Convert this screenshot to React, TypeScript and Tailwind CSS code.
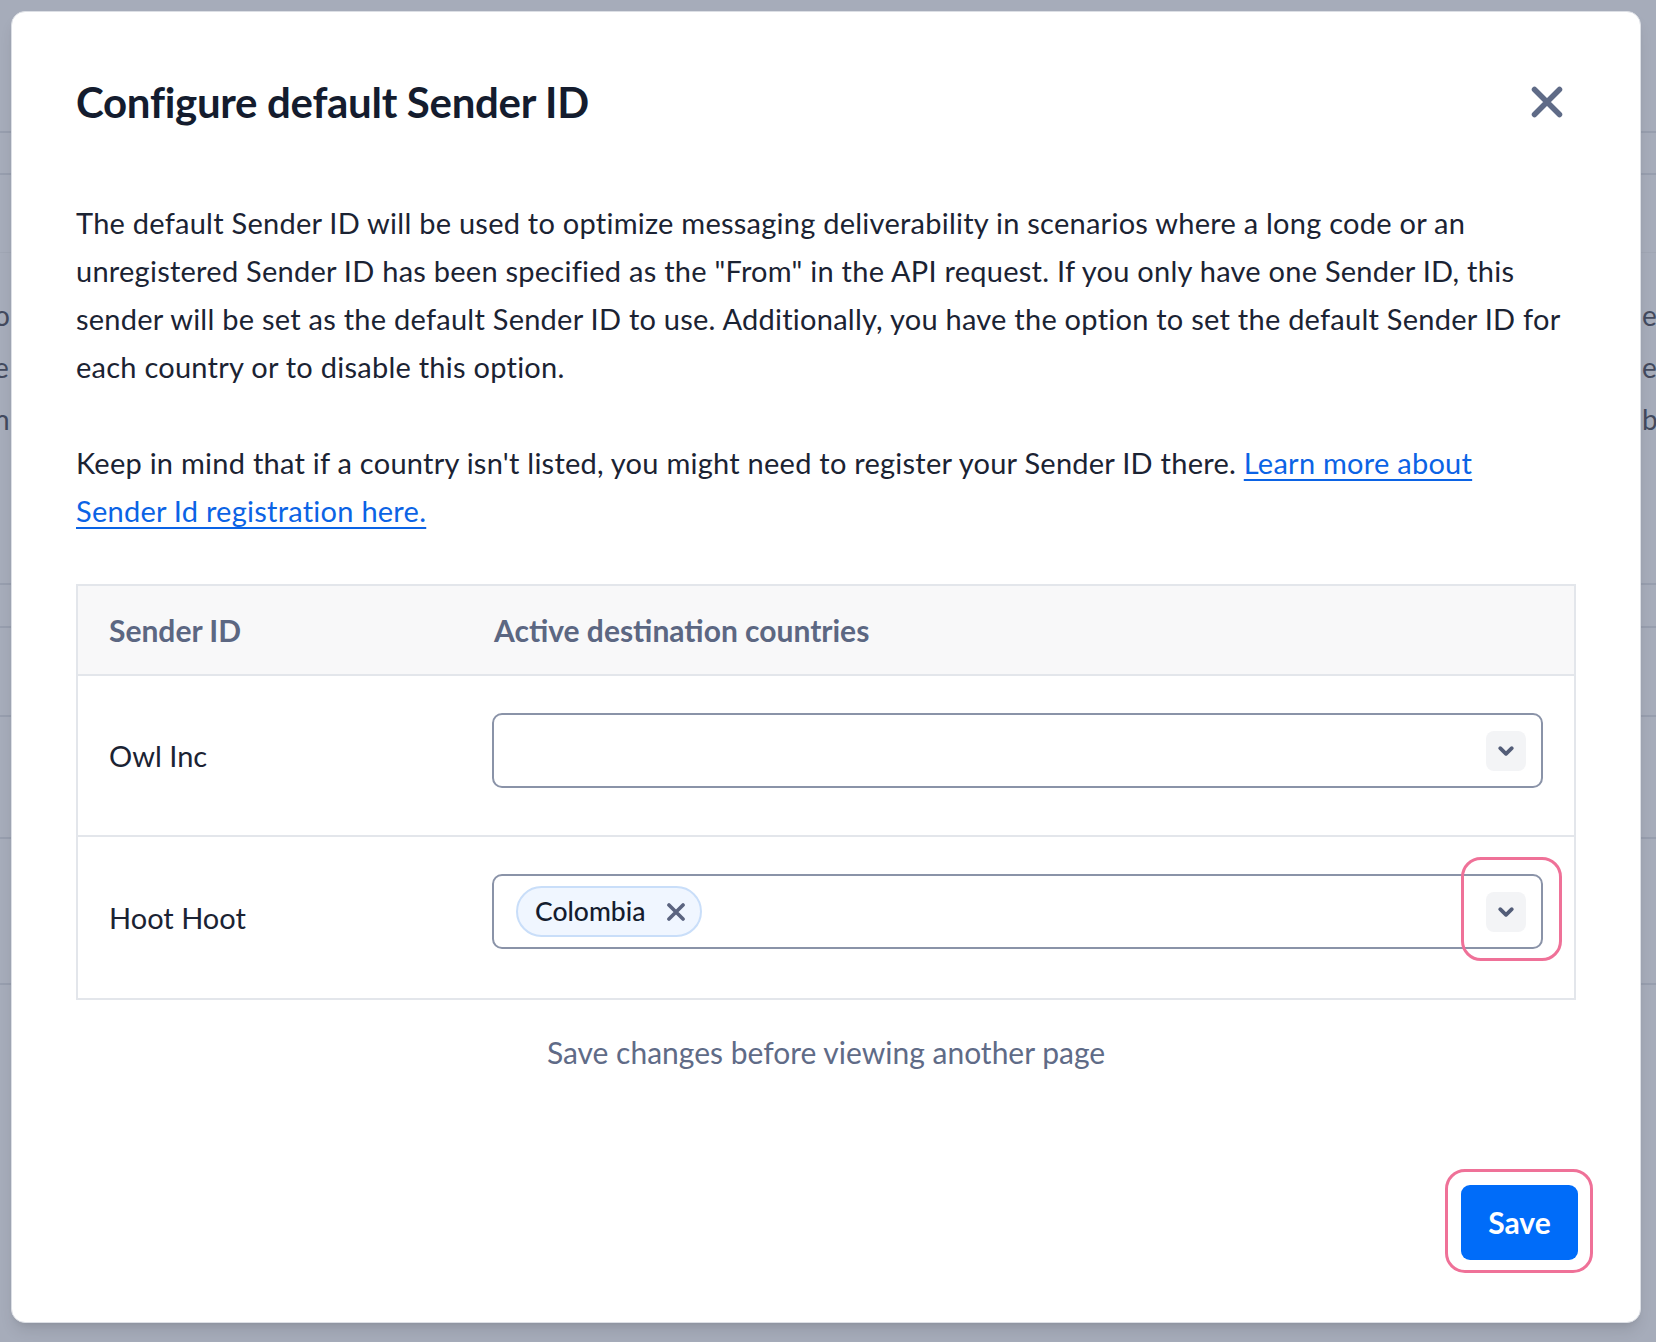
import { useState } from "react"

type SenderRow = {
    id: number
    name: string
    countries: string[]
    highlight?: boolean
}

const rows: SenderRow[] = [
    { id: 1, name: "Owl Inc", countries: [] },
    { id: 2, name: "Hoot Hoot", countries: ["Colombia"], highlight: true },
]

function ChevronDown() {
    return (
        <svg width="18" height="12" viewBox="0 0 18 12" fill="none">
            <path d="M3.2 3.2 9 8.8l5.8-5.6" stroke="#535d78" strokeWidth="3.8" strokeLinecap="round" strokeLinejoin="round" />
        </svg>
    )
}

function CloseIcon({ size = 32, stroke = 5.5, color = "#5f6b87" }: { size?: number; stroke?: number; color?: string }) {
    return (
        <svg width={size} height={size} viewBox="0 0 32 32" fill="none">
            <path d="M3.5 3.5 28.5 28.5M28.5 3.5 3.5 28.5" stroke={color} strokeWidth={stroke} strokeLinecap="round" />
        </svg>
    )
}

function CountrySelect({ countries, highlight }: { countries: string[]; highlight?: boolean }) {
    const [selected, setSelected] = useState(countries)

    return (
        <div className="relative flex h-[75px] items-center rounded-[10px] border-2 border-[#8a93a8] bg-white pl-[22px] pr-[15px]">
            <div className="flex grow items-center gap-2">
                {selected.map((c) => (
                    <span
                        key={c}
                        className="flex h-[51px] items-center gap-[22px] rounded-full border-2 border-[#c9def9] bg-[#f0f6ff] pl-[17px] pr-[15px] text-[26.5px] font-medium text-[#141c2e]"
                    >
                        {c}
                        <button onClick={() => setSelected((s) => s.filter((x) => x !== c))}>
                            <CloseIcon size={18} stroke={6.5} color="#5b6480" />
                        </button>
                    </span>
                ))}
            </div>
            <button className="flex h-[40px] w-[40px] items-center justify-center rounded-[8px] bg-[#f3f4f6]">
                <ChevronDown />
            </button>
            {highlight && (
                <div className="pointer-events-none absolute -top-[19px] -bottom-[14px] -right-[21px] w-[101px] rounded-[20px] border-[3px] border-[#ef7198]" />
            )}
        </div>
    )
}

export default function App() {
    return (
        <div className="relative h-[1342px] w-full overflow-hidden bg-[#a6acba] font-['Lato',sans-serif]">
            {/* page behind the overlay */}
            <div className="flex flex-col text-[28px] text-[#434a5e]">
                <div className="h-[133px] border-b-2 border-[#979eae]" />
                <div className="h-[42px] border-b-2 border-[#979eae]" />
                <div className="h-[78px] border-b border-[#a0a6b4]" />
                <div className="flex h-[332px] justify-between border-b-2 border-[#979eae] pt-[36px] leading-[52px]">
                    <div className="-ml-[6px] flex flex-col">
                        <span>o</span>
                        <span>e</span>
                        <span>n</span>
                    </div>
                    <div className="flex w-[14px] flex-col">
                        <span>e</span>
                        <span>e</span>
                        <span>bl</span>
                    </div>
                </div>
                <div className="h-[43px] border-b-2 border-[#979eae]" />
                <div className="h-[89px] border-b-2 border-[#979eae]" />
                <div className="h-[122px] border-b-2 border-[#979eae]" />
                <div className="h-[146px] border-b-2 border-[#979eae]" />
            </div>

            {/* Modal */}
            <div className="absolute left-[11px] top-[11px] flex h-[1312px] w-[1630px] flex-col rounded-[14px] border border-[#dcdfe5] bg-white px-[64px] pb-[62px] pt-[64px] shadow-lg">
                <div className="flex h-[52px] items-center justify-between">
                    <h2 className="text-[42px] font-bold leading-[52px] tracking-[-0.3px] text-[#141c2e]">
                        Configure default Sender ID
                    </h2>
                    <button className="mr-[13px]" title="Close">
                        <CloseIcon />
                    </button>
                </div>

                <p className="mt-[71px] text-[29px] leading-[48px] tracking-[0.25px] text-[#1b2333]">
                    <span className="block whitespace-nowrap">
                        The default Sender ID will be used to optimize messaging deliverability in scenarios where a long code or an
                    </span>
                    <span className="block whitespace-nowrap">
                        unregistered Sender ID has been specified as the "From" in the API request. If you only have one Sender ID, this
                    </span>
                    <span className="block whitespace-nowrap">
                        sender will be set as the default Sender ID to use. Additionally, you have the option to set the default Sender ID for
                    </span>
                    <span className="block whitespace-nowrap">each country or to disable this option.</span>
                </p>

                <p className="mt-[48px] text-[29px] leading-[48px] tracking-[0.25px] text-[#1b2333]">
                    <span className="block whitespace-nowrap">
                        Keep in mind that if a country isn't listed, you might need to register your Sender ID there.{" "}
                        <a href="#" className="text-[#0b63e5] underline underline-offset-[5px]">
                            Learn more about
                        </a>
                    </span>
                    <a href="#" className="block w-fit whitespace-nowrap text-[#0b63e5] underline underline-offset-[5px]">
                        Sender Id registration here.
                    </a>
                </p>

                {/* Table */}
                <div className="mt-[49px] border-2 border-[#e3e6eb]">
                    <div className="grid h-[90px] grid-cols-[414px_1fr] items-center border-b-2 border-[#e3e6eb] bg-[#f8f8f9] text-[30px] font-bold text-[#5c6782]">
                        <span className="pl-[31px]">Sender ID</span>
                        <span className="pl-[2px]">Active destination countries</span>
                    </div>
                    {rows.map((r, i) => (
                        <div
                            key={r.id}
                            className={`grid h-[161px] grid-cols-[414px_1fr] ${i < rows.length - 1 ? "border-b-2 border-[#e3e6eb]" : ""}`}
                        >
                            <span className="flex items-center pl-[31px] text-[29px] text-[#1b2333]">{r.name}</span>
                            <div className="pb-[48px] pr-[31px] pt-[37px]">
                                <CountrySelect countries={r.countries} highlight={r.highlight} />
                            </div>
                        </div>
                    ))}
                </div>

                <p className="mt-[28px] text-center text-[30px] leading-[48px] text-[#5f6b87]">
                    Save changes before viewing another page
                </p>

                <div className="mt-auto flex justify-end">
                    <div className="relative -mr-[2px]">
                        <button className="h-[75px] w-[117px] rounded-[9px] bg-[#006cf9] text-[30px] font-bold text-white">
                            Save
                        </button>
                        <div className="pointer-events-none absolute -bottom-[13px] -left-[16px] -right-[15px] -top-[16px] rounded-[20px] border-[3px] border-[#ef7198]" />
                    </div>
                </div>
            </div>
        </div>
    )
}
